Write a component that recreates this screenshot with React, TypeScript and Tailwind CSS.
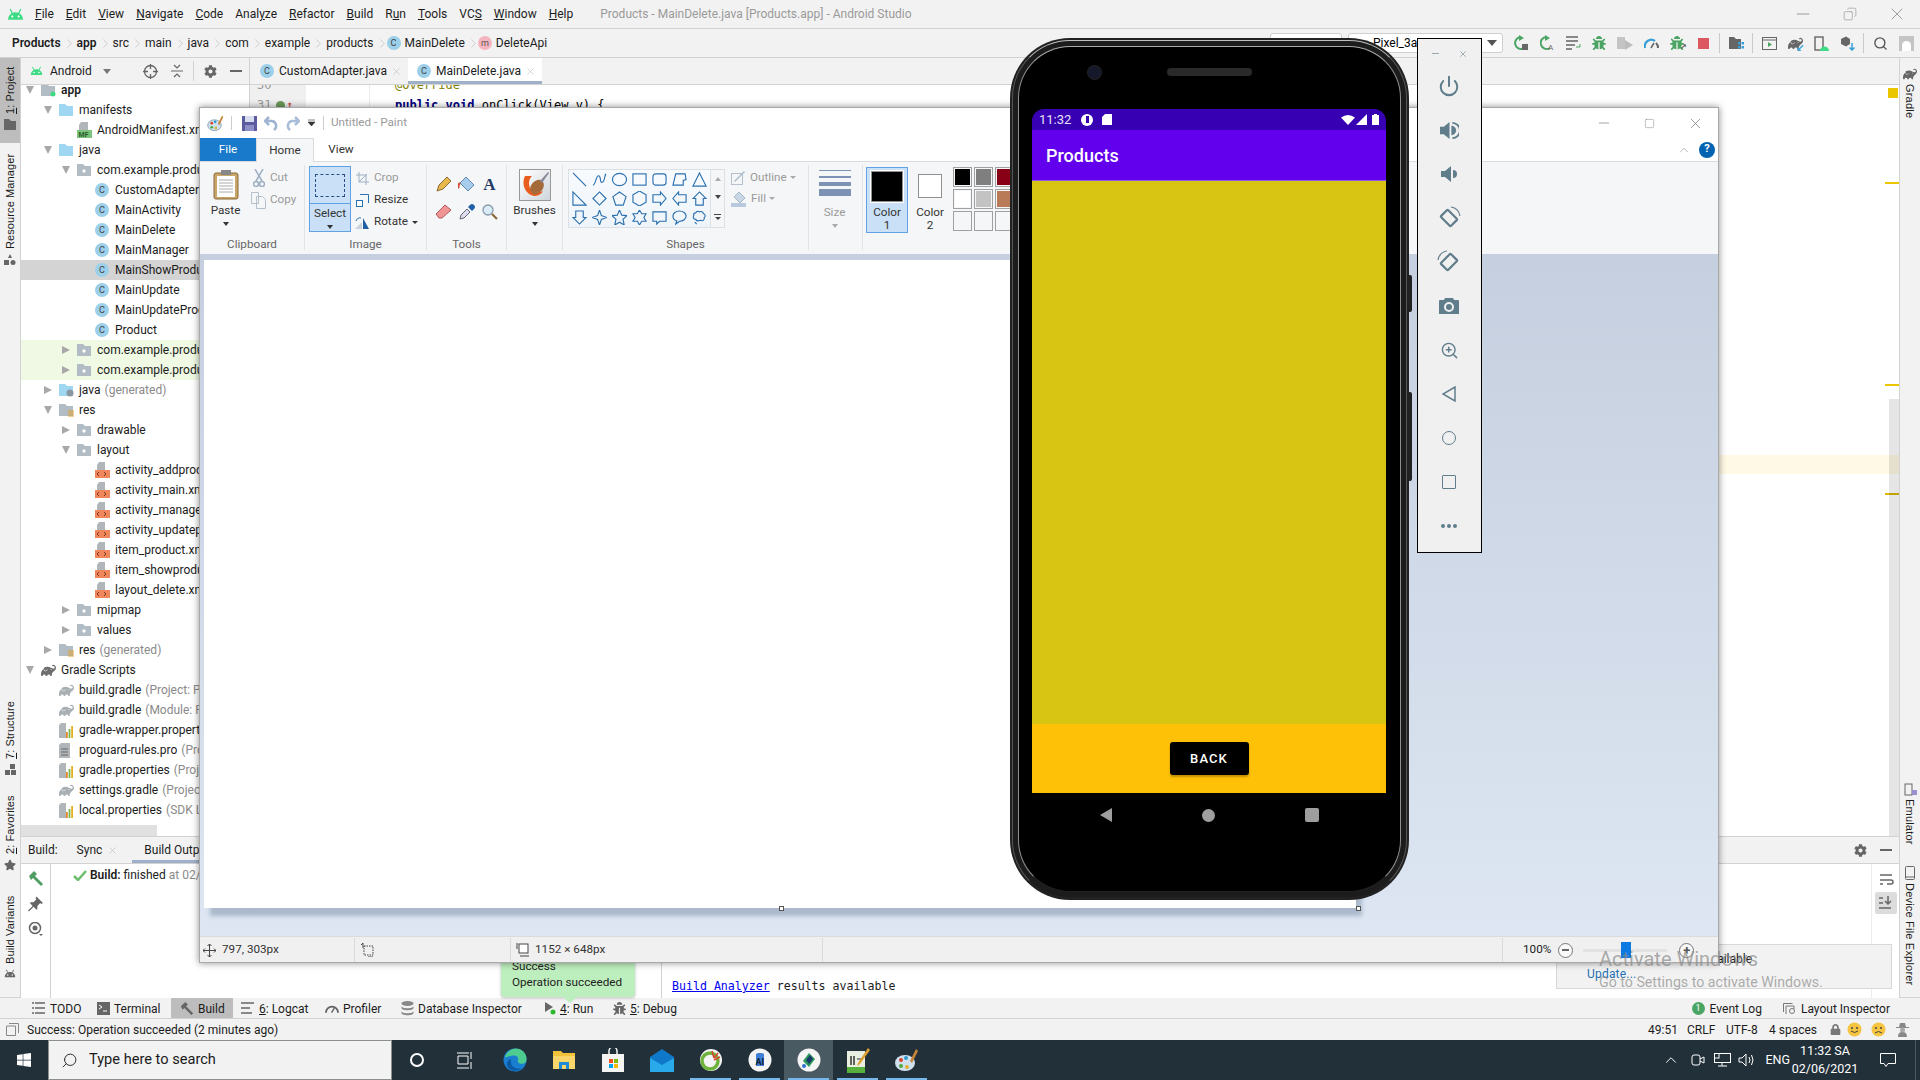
import React from "react";
import { FaCog, FaBug, FaStar, FaWindows, FaLock } from "react-icons/fa";
import { SiGradle } from "react-icons/si";
import { Power, ZoomIn, Search, ChevronUp, ChevronRight, Minus, X, Square, Copy } from "lucide-react";

// --- small shared icons ---
const Letter = ({ l, pink }: { l: string; pink?: boolean }) => (
  <span
    className={
      pink
        ? "flex h-[14px] w-[14px] shrink-0 items-center justify-center rounded-full bg-[#f4b4c0] text-[9px] leading-none text-[#555]"
        : "flex h-[14px] w-[14px] shrink-0 items-center justify-center rounded-full bg-[#9ccfe9] text-[9px] leading-none text-[#444]"
    }
  >
    {l}
  </span>
);

const AndroidHead = ({ color = "#3ddc84", size = 16 }: { color?: string; size?: number }) => (
  <svg width={size} height={size * 0.75} viewBox="0 0 16 12">
    <path d="M1 11C1 7 4 4 8 4s7 3 7 7z" fill={color} />
    <path d="M3 1l2 4M13 1l-2 4" stroke={color} strokeWidth="1.2" />
    <circle cx="5" cy="8" r="1" fill="#fff" />
    <circle cx="11" cy="8" r="1" fill="#fff" />
  </svg>
);

const Folder = ({ kind }: { kind: "pkg" | "src" | "gen" | "res" | "grey" }) => {
  const fill = kind === "src" || kind === "gen" ? "#9fd6f2" : "#b1bcc4";
  return (
    <svg width="15" height="14" viewBox="0 0 15 14" className="shrink-0">
      <path d="M0 1h6l2 2h6v10H0z" fill={fill} />
      {kind === "pkg" && <circle cx="7" cy="8" r="1.7" fill="#fff" />}
      {kind === "gen" && <circle cx="11" cy="10" r="3.5" fill="#8a979f" />}
      {kind === "res" && <path d="M9 8h6M9 10h6M9 12h6M9 14h6" stroke="#e0a030" strokeWidth="1" />}
      {kind === "grey" && <circle cx="12" cy="11" r="2.500" fill="#3ddc84" />}
    </svg>
  );
};

const XmlFile = () => (
  <svg width="15" height="16" viewBox="0 0 15 16" className="shrink-0">
    <path d="M4 0h6v8H2V3z" fill="#b1b6ba" />
    <rect x="0" y="8" width="15" height="8" fill="#f0875c" />
    <path d="M4 10l-2 2 2 2M9 10l2 2-2 2" stroke="#7a3a1c" fill="none" />
  </svg>
);

const PropsFile = () => (
  <svg width="14" height="15" viewBox="0 0 14 15" className="shrink-0">
    <path d="M2 0h5v15H0V2z" fill="#b1b6ba" />
    <rect x="7" y="9" width="1.8" height="6" fill="#e08a2a" />
    <rect x="9.6" y="6" width="1.8" height="9" fill="#7cb850" />
    <rect x="12.2" y="3" width="1.8" height="12" fill="#e8b020" />
  </svg>
);

const TextFile = () => (
  <svg width="11" height="15" viewBox="0 0 11 15" className="shrink-0">
    <path d="M2 0h9v15H0V2z" fill="#b1b6ba" />
    <path d="M2 6h7M2 9h7M2 12h7" stroke="#666" />
  </svg>
);

const Manifest = () => (
  <svg width="15" height="16" viewBox="0 0 15 16" className="shrink-0">
    <path d="M4 0h7v8H2V3z" fill="#b1b6ba" />
    <rect x="0" y="8" width="15" height="8" fill="#7cc47c" />
    <text x="1.5" y="15" fontSize="7" fontWeight="700" fill="#2a5a2a">MF</text>
  </svg>
);

const Gradle = ({ c = "#a9b0b4" }: { c?: string }) => <SiGradle size={15} color={c} className="shrink-0" />;

type Row = { t: string; sub?: string; lvl: number; arrow?: "o" | "c"; icon: React.ReactNode; bg?: string; bold?: boolean };

const Cl = <Letter l="C" />;
const tree: Row[] = [
  { t: "app", lvl: 0, arrow: "o", bold: true, icon: <Folder kind="grey" /> },
  { t: "manifests", lvl: 1, arrow: "o", icon: <Folder kind="src" /> },
  { t: "AndroidManifest.xml", lvl: 2, icon: <Manifest /> },
  { t: "java", lvl: 1, arrow: "o", icon: <Folder kind="src" /> },
  { t: "com.example.products", lvl: 2, arrow: "o", icon: <Folder kind="pkg" /> },
  { t: "CustomAdapter", lvl: 3, icon: Cl },
  { t: "MainActivity", lvl: 3, icon: Cl },
  { t: "MainDelete", lvl: 3, icon: Cl },
  { t: "MainManager", lvl: 3, icon: Cl },
  { t: "MainShowProduct", lvl: 3, icon: Cl, bg: "sel" },
  { t: "MainUpdate", lvl: 3, icon: Cl },
  { t: "MainUpdateProduct", lvl: 3, icon: Cl },
  { t: "Product", lvl: 3, icon: Cl },
  { t: "com.example.products", lvl: 2, arrow: "c", icon: <Folder kind="pkg" />, bg: "test" },
  { t: "com.example.products", lvl: 2, arrow: "c", icon: <Folder kind="pkg" />, bg: "test" },
  { t: "java", sub: "(generated)", lvl: 1, arrow: "c", icon: <Folder kind="gen" /> },
  { t: "res", lvl: 1, arrow: "o", icon: <Folder kind="res" /> },
  { t: "drawable", lvl: 2, arrow: "c", icon: <Folder kind="pkg" /> },
  { t: "layout", lvl: 2, arrow: "o", icon: <Folder kind="pkg" /> },
  { t: "activity_addproduct", lvl: 3, icon: <XmlFile /> },
  { t: "activity_main.xml", lvl: 3, icon: <XmlFile /> },
  { t: "activity_manager", lvl: 3, icon: <XmlFile /> },
  { t: "activity_updateproduct", lvl: 3, icon: <XmlFile /> },
  { t: "item_product.xml", lvl: 3, icon: <XmlFile /> },
  { t: "item_showproduct", lvl: 3, icon: <XmlFile /> },
  { t: "layout_delete.xml", lvl: 3, icon: <XmlFile /> },
  { t: "mipmap", lvl: 2, arrow: "c", icon: <Folder kind="pkg" /> },
  { t: "values", lvl: 2, arrow: "c", icon: <Folder kind="pkg" /> },
  { t: "res", sub: "(generated)", lvl: 1, arrow: "c", icon: <Folder kind="res" /> },
  { t: "Gradle Scripts", lvl: 0, arrow: "o", icon: <Gradle c="#6e6e6e" /> },
  { t: "build.gradle", sub: "(Project: Products)", lvl: 1, icon: <Gradle /> },
  { t: "build.gradle", sub: "(Module: Products.app)", lvl: 1, icon: <Gradle /> },
  { t: "gradle-wrapper.properties", lvl: 1, icon: <PropsFile /> },
  { t: "proguard-rules.pro", sub: "(ProGuard Rules)", lvl: 1, icon: <TextFile /> },
  { t: "gradle.properties", sub: "(Project Properties)", lvl: 1, icon: <PropsFile /> },
  { t: "settings.gradle", sub: "(Project Settings)", lvl: 1, icon: <Gradle /> },
  { t: "local.properties", sub: "(SDK Location)", lvl: 1, icon: <PropsFile /> },
];

const TreeRow = ({ r }: { r: Row }) => (
  <div
    className={
      r.bg === "sel"
        ? "relative flex h-[20px] shrink-0 items-center whitespace-nowrap bg-[#d4d4d4]"
        : r.bg === "test"
        ? "relative flex h-[20px] shrink-0 items-center whitespace-nowrap bg-[#eff9e3]"
        : "relative flex h-[20px] shrink-0 items-center whitespace-nowrap"
    }
    style={{ paddingLeft: 3 + r.lvl * 18 }}
  >
    <span className="flex w-[12px] shrink-0 justify-center">
      {r.arrow === "o" && <span className="h-0 w-0 border-x-[4.5px] border-t-[8px] border-x-transparent border-t-[#a8a8a8]" />}
      {r.arrow === "c" && <span className="h-0 w-0 border-y-[4.5px] border-l-[8px] border-y-transparent border-l-[#a8a8a8]" />}
    </span>
    <span className="ml-[5px] flex w-[20px] shrink-0 justify-start">{r.icon}</span>
    <span className={r.bold ? "font-semibold text-[#1c1c1c]" : "text-[#1c1c1c]"}>{r.t}</span>
    {r.sub && <span className="ml-[4px] text-[#8a8a8a]">{r.sub}</span>}
  </div>
);

const VLabel = ({ children, icon, cls, textCls }: { children: React.ReactNode; icon: React.ReactNode; cls: string; textCls: string }) => (
  <div className={cls}>
    <span className={textCls}>{children}</span>
    <span className="mt-[5px]">{icon}</span>
  </div>
);

// --- menu + navigation ---
const menu: [string, string, string][] = [
  ["", "F", "ile"], ["", "E", "dit"], ["", "V", "iew"], ["", "N", "avigate"], ["", "C", "ode"],
  ["Anal", "y", "ze"], ["", "R", "efactor"], ["", "B", "uild"], ["R", "u", "n"], ["", "T", "ools"],
  ["VC", "S", ""], ["", "W", "indow"], ["", "H", "elp"],
];

const MenuBar = () => (
  <div className="flex h-[29px] shrink-0 items-center border-b border-[#d2d2d2] bg-[#f2f2f2]">
    <span className="ml-[7px] w-[28px]"><AndroidHead size={17} /></span>
    <div className="flex gap-[12px] text-[#1c1c1c]">
      {menu.map(([a, b, c]) => (
        <span key={a + b + c}>{a}<span className="underline">{b}</span>{c}</span>
      ))}
    </div>
    <span className="ml-[27px] text-[#9a9a9a]">Products - MainDelete.java [Products.app] - Android Studio</span>
    <div className="ml-auto flex items-center gap-[30px] pr-[13px] text-[#8a8a8a]">
      <Minus size={20} strokeWidth={1} />
      <Copy size={14} strokeWidth={1} className="-scale-x-100" />
      <X size={20} strokeWidth={1} />
    </div>
  </div>
);

const Sep = () => <ChevronRight size={15} strokeWidth={1} className="mx-[1px] text-[#b8b8b8]" />;

const ToolSlot = ({ children }: { children: React.ReactNode }) => (
  <span className="flex w-[26px] shrink-0 items-center justify-center">{children}</span>
);
const Div = () => <span className="mx-[3px] h-[20px] w-px shrink-0 bg-[#c9c9c9]" />;

const NavBar = () => (
  <div className="flex h-[29px] shrink-0 items-center border-b border-[#d2d2d2] bg-[#f2f2f2] pl-[12px]">
    <b className="font-semibold">Products</b><span className="w-[16px]"><Sep /></span>
    <b className="font-semibold">app</b><span className="w-[16px]"><Sep /></span>
    <span>src</span><span className="w-[16px]"><Sep /></span>
    <span>main</span><span className="w-[16px]"><Sep /></span>
    <span>java</span><span className="w-[16px]"><Sep /></span>
    <span>com</span><span className="w-[16px]"><Sep /></span>
    <span>example</span><span className="w-[16px]"><Sep /></span>
    <span>products</span><span className="w-[13px]"><Sep /></span>
    <Letter l="C" /><span className="ml-[4px]">MainDelete</span><span className="w-[13px]"><Sep /></span>
    <Letter l="m" pink /><span className="ml-[4px]">DeleteApi</span>
    <div className="ml-auto flex items-center">
      <span className="h-[20px] w-[72px] rounded-[3px] border border-[#cfcfcf] bg-white" />
      <span className="ml-[6px] flex h-[20px] w-[155px] items-center justify-between rounded-[3px] border border-[#cfcfcf] bg-white pl-[4px] pr-[5px]">
        <span className="pl-[20px] text-black">Pixel_3a</span>
        <span className="h-0 w-0 border-x-[5px] border-t-[6px] border-x-transparent border-t-[#555]" />
      </span>
      <span className="w-[5px]" />
      <ToolSlot><svg width="15" height="16" viewBox="0 0 15 16"><path d="M7 2a6 6 0 1 0 6 7" stroke="#4aa564" strokeWidth="2" fill="none" /><path d="M5 0l5 3-5 3z" fill="#4aa564" /><rect x="8" y="9" width="6" height="6" fill="#666" /></svg></ToolSlot>
      <ToolSlot><svg width="15" height="16" viewBox="0 0 15 16"><path d="M7 2a6 6 0 1 0 3 11" stroke="#4aa564" strokeWidth="2" fill="none" /><path d="M5 0l5 3-5 3z" fill="#4aa564" /><text x="8" y="15" fontSize="8" fill="#666">A</text></svg></ToolSlot>
      <ToolSlot><svg width="15" height="14" viewBox="0 0 15 14"><path d="M0 1h12M0 5h12M0 9h9M0 13h6" stroke="#666" strokeWidth="1.5" /><path d="M14 8v3h-4" stroke="#4aa564" fill="none" /></svg></ToolSlot>
      <ToolSlot><FaBug size={14} color="#4aa564" /></ToolSlot>
      <ToolSlot><svg width="16" height="15" viewBox="0 0 16 15"><path d="M0 1h8v12H0z" fill="#c4c4c4" /><path d="M8 4l8 5-8 5z" fill="#bcbcbc" /></svg></ToolSlot>
      <ToolSlot><svg width="15" height="11" viewBox="0 0 15 11"><path d="M1 10a6.5 6.5 0 0 1 10-7" stroke="#389fd6" strokeWidth="2.2" fill="none" /><path d="M14 10a6.5 6.5 0 0 0-2-5" stroke="#666" strokeWidth="2" fill="none" /><path d="M7 10l3-5" stroke="#666" strokeWidth="1.5" /></svg></ToolSlot>
      <ToolSlot><span className="relative"><FaBug size={14} color="#4aa564" /><span className="absolute -bottom-[1px] -right-[3px] text-[8px] font-bold leading-none text-[#666]">↗</span></span></ToolSlot>
      <ToolSlot><span className="h-[11px] w-[11px] bg-[#db5860]" /></ToolSlot>
      <Div />
      <ToolSlot><svg width="15" height="12" viewBox="0 0 15 12"><path d="M0 0h5l2 2h5v10H0z" fill="#666" /><rect x="9" y="5" width="2.5" height="2.5" fill="#389fd6" /><rect x="12.5" y="5" width="2.5" height="2.5" fill="#389fd6" /><rect x="9" y="9" width="2.5" height="2.5" fill="#389fd6" /><rect x="12.5" y="9" width="2.5" height="2.5" fill="#389fd6" /></svg></ToolSlot>
      <Div />
      <ToolSlot><svg width="15" height="13" viewBox="0 0 15 13"><rect x=".5" y=".5" width="14" height="12" fill="none" stroke="#666" /><path d="M0 3h15" stroke="#666" /><path d="M6 5l4 2.500-4 2.500z" fill="#4aa564" /></svg></ToolSlot>
      <ToolSlot><span className="relative"><SiGradle size={15} color="#666" /><span className="absolute -bottom-[2px] -right-[1px] text-[10px] font-bold leading-none text-[#389fd6]">↙</span></span></ToolSlot>
      <ToolSlot><svg width="15" height="15" viewBox="0 0 15 15"><rect x="1" y="1" width="8" height="13" fill="none" stroke="#666" strokeWidth="1.4" /><path d="M6 15a4.500 4.500 0 0 1 9 0z" fill="#3ddc84" /></svg></ToolSlot>
      <ToolSlot><svg width="15" height="15" viewBox="0 0 15 15"><path d="M1 3l5-2.500L10 3v5l-4 2.500L1 8z" fill="#666" /><path d="M12 7v7M9.500 11.500L12 14l2.500-2.500" stroke="#389fd6" strokeWidth="1.5" fill="none" /></svg></ToolSlot>
      <Div />
      <ToolSlot><Search size={15} strokeWidth={2.2} color="#555" /></ToolSlot>
      <ToolSlot><span className="flex h-[15px] w-[15px] items-end justify-center overflow-hidden bg-[#c4c4c4]"><span className="h-[10px] w-[9px] rounded-t-full bg-white" /></span></ToolSlot>
      <span className="w-[1px]" />
    </div>
  </div>
);

// --- project + editor ---
const ProjectPanel = () => (
  <div className="flex h-full w-[229px] shrink-0 flex-col border-r border-[#d2d2d2]">
    <div className="relative z-10 flex h-[27px] shrink-0 items-center border-b border-[#d2d2d2] bg-[#f2f2f2] pl-[9px]">
      <AndroidHead size={13} />
      <span className="ml-[7px] w-[44px]">Android</span>
      <span className="ml-[9px] h-0 w-0 border-x-[4px] border-t-[5px] border-x-transparent border-t-[#777]" />
      <svg width="15" height="15" viewBox="0 0 15 15" className="ml-[32px]"><circle cx="7.500" cy="7.500" r="6" fill="none" stroke="#666" strokeWidth="1.300" /><path d="M7.500 0v5M7.500 10v5M0 7.500h5M10 7.500h5" stroke="#666" strokeWidth="1.300" /></svg>
      <svg width="12" height="14" viewBox="0 0 12 14" className="ml-[13px]"><path d="M0 7h12M3 1l3 3 3-3M3 13l3-3 3 3" stroke="#666" strokeWidth="1.200" fill="none" /></svg>
      <span className="ml-[10px] h-[20px] w-px bg-[#d2d2d2]" />
      <FaCog size={13} color="#666" className="ml-[10px]" />
      <span className="ml-[13px] h-[2px] w-[12px] bg-[#666]" />
    </div>
    <div className="-mt-[5px] flex flex-1 flex-col overflow-hidden bg-white">
      <div className="flex flex-col">{tree.map((r, i) => <TreeRow key={i} r={r} />)}</div>
      <div className="mt-auto flex h-[11px] shrink-0"><span className="w-[136px] bg-[#e0e0e0]" /></div>
    </div>
  </div>
);

const Editor = () => (
  <div className="relative flex h-full min-w-0 flex-1 flex-col">
    <div className="flex h-[27px] shrink-0 border-b border-[#d2d2d2] bg-[#f2f2f2]">
      <div className="flex w-[158px] items-center pl-[10px]">
        <Letter l="C" /><span className="ml-[5px]">CustomAdapter.java</span>
        <X size={11} strokeWidth={1} className="ml-[4px] text-[#aaa]" />
      </div>
      <div className="relative flex w-[134px] items-center bg-white pl-[9px]">
        <Letter l="C" /><span className="ml-[5px]">MainDelete.java</span>
        <X size={11} strokeWidth={1} className="ml-[4px] text-[#aaa]" />
        <span className="absolute bottom-0 left-0 right-0 h-[3px] bg-[#9fb1c9]" />
      </div>
    </div>
    <div className="flex flex-1 overflow-hidden bg-white">
      <div className="flex w-[56px] shrink-0 flex-col bg-[#f0f0f0] pl-[7px] font-['DejaVu_Sans_Mono',monospace] text-[12px] text-[#999]">
        <span className="-mt-[6px] h-[12px] leading-[12px]">30</span>
        <div className="mt-[6px] flex h-[16px] items-center">
          <span>31</span>
          <span className="ml-[5px] h-[9px] w-[9px] rounded-full bg-[#6a9a5a] text-[0px]" />
          <span className="ml-[1px] text-[10px] font-bold leading-none text-[#c44]">↑</span>
        </div>
      </div>
      <div className="w-[64px] shrink-0 border-r border-[#ececec]" />
      <div className="relative min-w-0 flex-1 pl-[25px] font-['DejaVu_Sans_Mono',monospace] text-[12px] text-black">
        <div className="-mt-[6px] h-[12px] leading-[12px] text-[#808000]">@Override</div>
        <div className="mt-[6px] h-[16px] leading-[16px]"><b className="text-[#000080]">public void</b> onClick(View v) {"{"}</div>
        <div className="absolute left-0 right-0 top-[370px] h-[19px] bg-[#fff9e5]" />
        <span className="absolute right-[1px] top-[3px] h-[10px] w-[10px] bg-[#eac600]" />
        <span className="absolute right-0 top-[97px] h-[2px] w-[14px] bg-[#eac600]" />
        <span className="absolute right-0 top-[299px] h-[2px] w-[14px] bg-[#eac600]" />
        <span className="absolute right-0 top-[408px] h-[2px] w-[14px] bg-[#d8b800]" />
        <span className="absolute bottom-0 right-0 top-[314px] w-[10px] bg-[#000]/10" />
      </div>
    </div>
  </div>
);

// --- build panel ---
const BuildPanel = () => (
  <div className="relative flex h-[162px] shrink-0 flex-col border-t border-[#d2d2d2]">
    <div className="flex h-[27px] shrink-0 items-center border-b border-[#d2d2d2] bg-[#f2f2f2]">
      <span className="ml-[7px]">Build:</span>
      <span className="ml-[19px]">Sync</span>
      <X size={11} strokeWidth={1} className="ml-[5px] text-[#aaa]" />
      <div className="relative ml-[14px] flex h-full items-center px-[12px]">
        <span>Build Output</span>
        <span className="absolute bottom-0 left-0 right-0 h-[3px] bg-[#9fb1c9]" />
      </div>
      <div className="ml-auto flex items-center gap-[13px] pr-[7px]">
        <FaCog size={13} color="#666" />
        <span className="h-[2px] w-[12px] bg-[#666]" />
      </div>
    </div>
    <div className="flex min-h-0 flex-1 bg-white">
      <div className="flex w-[30px] shrink-0 flex-col items-center gap-[10px] border-r border-[#d2d2d2] pt-[6px]">
        <svg width="16" height="16" viewBox="0 0 16 16"><path d="M1 6l5-5 3 3-2 2 8 8-2 2-8-8-2 2z" fill="#4f9d63" /></svg>
        <svg width="15" height="16" viewBox="0 0 16 16"><path d="M9 0l7 7-2 1-1-1-3 3 0 3-1 1-3-3-5 5-1-1 5-5-3-3 1-1h3l3-3-1-1z" fill="#666" /></svg>
        <svg width="15" height="15" viewBox="0 0 15 15"><circle cx="7" cy="6" r="5.500" fill="none" stroke="#666" strokeWidth="1.500" /><circle cx="7" cy="6" r="2.500" fill="#666" /><path d="M11 12h4l-2 2z" fill="#666" /></svg>
      </div>
      <div className="flex w-[611px] shrink-0 items-start border-r border-[#d2d2d2] pl-[22px] pt-[1px]">
        <div className="flex h-[20px] items-center">
          <svg width="14" height="11" viewBox="0 0 14 11"><path d="M1 6l4 4 8-9" stroke="#6cbf6c" strokeWidth="2.500" fill="none" /></svg>
          <b className="ml-[3px] font-semibold">Build:</b>
          <span className="ml-[3px]">finished</span>
          <span className="ml-[3px] text-[#8a8a8a]">at 02/06/2021 11:30</span>
        </div>
      </div>
      <div className="flex min-w-0 flex-1 flex-col justify-end pb-[4px] pl-[10px] font-['DejaVu_Sans_Mono',monospace] text-[11.600px] leading-[16px]">
        <div><span className="text-[#0000ee] underline">Build Analyzer</span> results available</div>
      </div>
      <div className="flex w-[28px] shrink-0 flex-col items-center gap-[2px] border-l border-[#ececec] pt-[4px]">
        <svg width="22" height="22" viewBox="0 0 22 22"><path d="M5 7h12M5 12h11a2 2 0 0 1 0 4h-4M5 16h3" stroke="#666" strokeWidth="1.500" fill="none" /></svg>
        <span className="flex h-[22px] w-[22px] items-center justify-center rounded-[2px] bg-[#dcdcdc]">
          <svg width="14" height="14" viewBox="0 0 14 14"><path d="M0 2h4M0 7h4M0 12h12M9 0v7M6 5l3 3 3-3" stroke="#666" strokeWidth="1.500" fill="none" /></svg>
        </span>
      </div>
    </div>
    {/* update balloon */}
    <div className="absolute bottom-[9px] right-[7px] flex h-[45px] w-[336px] flex-col items-start justify-start border border-[#d8d8d8] bg-[#f2f2f2] pl-[30px] pt-[6px]">
      <span className="pl-[118px] leading-[16px]">available</span>
      <span className="leading-[15px] tracking-[0.2px] text-[#2470b3]">Update...</span>
    </div>
  </div>
);

type Bt = { t: React.ReactNode; icon: React.ReactNode; cls: string };
const bottomItems: Bt[] = [
  { t: "TODO", cls: "flex w-[65px] items-center", icon: <svg width="14" height="12" viewBox="0 0 14 12"><path d="M3 1h10M3 6h10M3 11h10M0 1h2M0 6h2M0 11h2" stroke="#666" strokeWidth="1.500" /></svg> },
  { t: "Terminal", cls: "flex w-[74px] items-center", icon: <svg width="13" height="13" viewBox="0 0 13 13"><rect width="13" height="13" fill="#666" /><path d="M2 3l3 2-3 2M6 9h4" stroke="#fff" fill="none" /></svg> },
  { t: "Build", cls: "flex h-full w-[62px] items-center bg-[#bdbdbd] pl-[9px]", icon: <svg width="14" height="14" viewBox="0 0 16 16"><path d="M1 6l5-5 3 3-2 2 8 8-2 2-8-8-2 2z" fill="#666" /></svg> },
  { t: <span><span className="underline">6</span>: Logcat</span>, cls: "ml-[8px] flex w-[84px] items-center", icon: <svg width="14" height="12" viewBox="0 0 14 12"><path d="M0 1h13M0 6h9M0 11h11" stroke="#666" strokeWidth="1.500" /></svg> },
  { t: "Profiler", cls: "flex w-[76px] items-center", icon: <svg width="14" height="11" viewBox="0 0 15 11"><path d="M1 10a6.500 6.500 0 0 1 13 0" stroke="#666" strokeWidth="2" fill="none" /><path d="M7 10l3-5" stroke="#666" strokeWidth="1.500" /></svg> },
  { t: "Database Inspector", cls: "flex w-[143px] items-center", icon: <svg width="13" height="15" viewBox="0 0 13 15"><ellipse cx="6.500" cy="2.500" rx="6" ry="2.500" fill="#888" /><path d="M.5 5v2c0 3 12 3 12 0V5c0 3-12 3-12 0zM.5 10v2c0 3 12 3 12 0v-2c0 3-12 3-12 0z" fill="#888" /></svg> },
  { t: <span><span className="underline">4</span>: Run</span>, cls: "flex w-[69px] items-center", icon: <svg width="12" height="14" viewBox="0 0 12 14"><path d="M1 1l8 5-8 5z" fill="#666" /><circle cx="9" cy="11" r="2.500" fill="#2eb82e" /></svg> },
  { t: <span><span className="underline">5</span>: Debug</span>, cls: "flex items-center", icon: <FaBug size={13} color="#666" /> },
];

const BottomBar = () => (
  <div className="flex h-[22px] shrink-0 items-center border-y border-[#d2d2d2] bg-[#f2f2f2] pl-[32px]">
    {bottomItems.map((b, i) => (
      <div key={i} className={b.cls}>
        {b.icon}
        <span className="ml-[4px] whitespace-nowrap pt-[1px]">{b.t}</span>
      </div>
    ))}
    <div className="ml-auto flex items-center pr-[30px] pt-[1px]">
      <span className="flex h-[13px] w-[13px] items-center justify-center rounded-full bg-[#4aa564] text-[9px] text-white">1</span>
      <span className="ml-[5px]">Event Log</span>
      <svg width="13" height="12" viewBox="0 0 13 12" className="ml-[21px]"><path d="M.5 9V.5h9M3 11V3h8v3" stroke="#777" fill="none" /><circle cx="9" cy="8" r="2.500" fill="none" stroke="#777" /></svg>
      <span className="ml-[5px]">Layout Inspector</span>
    </div>
  </div>
);

const Face = ({ sad }: { sad?: boolean }) => (
  <svg width="15" height="15" viewBox="0 0 15 15">
    <circle cx="7.500" cy="7.500" r="7" fill="#f5c542" />
    <circle cx="5" cy="6" r="1" fill="#444" />
    <circle cx="10" cy="6" r="1" fill="#444" />
    <path d={sad ? "M4 11q3.500-3 7 0" : "M4 9q3.500 3 7 0"} stroke="#444" fill="none" />
  </svg>
);

const StatusBar = () => (
  <div className="flex h-[21px] shrink-0 items-center bg-[#f2f2f2] pl-[6px]">
    <svg width="13" height="13" viewBox="0 0 13 13"><path d="M3 .5h9.500V10M.5 3h9v9.500h-9z" fill="none" stroke="#888" /></svg>
    <span className="ml-[8px]">Success: Operation succeeded (2 minutes ago)</span>
    <div className="ml-auto flex items-center pr-[11px]">
      <span className="w-[39px]">49:51</span>
      <span className="w-[39px]">CRLF</span>
      <span className="w-[43px]">UTF-8</span>
      <span className="w-[61px]">4 spaces</span>
      <span className="w-[17px]"><FaLock size={11} color="#777" /></span>
      <span className="w-[24px]"><Face /></span>
      <span className="w-[25px]"><Face sad /></span>
      <svg width="13" height="14" viewBox="0 0 13 14"><path d="M3 4l1-4h5l1 4h3v1H0V4zM2 14c0-4 2-5 4.500-5S11 10 11 14z" fill="#888" /><circle cx="6.500" cy="7" r="2.500" fill="#aaa" /></svg>
    </div>
  </div>
);

// --- taskbar ---
const Task = ({ children, active, open }: { children: React.ReactNode; open?: boolean; active?: boolean }) => (
  <div className={active ? "relative flex h-full w-[49px] items-center justify-center bg-[#4a5a62]" : "relative flex h-full w-[49px] items-center justify-center"}>
    {children}
    {open && <span className="absolute bottom-0 left-[4px] right-[4px] h-[2px] bg-[#76b9ed]" />}
  </div>
);

const Taskbar = () => (
  <div className="flex h-[40px] shrink-0 items-center bg-[#22303a] text-white">
    <div className="flex w-[48px] justify-center"><FaWindows size={16} /></div>
    <div className="flex h-full w-[344px] items-center border border-[#8a8f92] bg-[#f2f2f2] pl-[12px] text-[#1a1a1a]">
      <Search size={17} strokeWidth={1.300} className="-scale-x-100 text-[#222]" />
      <span className="ml-[11px] text-[14.600px]">Type here to search</span>
    </div>
    <div className="flex h-full items-center">
      <Task><span className="h-[14px] w-[14px] rounded-full border-[2px] border-white" /></Task>
      <Task><svg width="17" height="17" viewBox="0 0 17 17"><path d="M0 1h12M0 16h12M14 0v7M14 10v7M1 4h10v8H1z" stroke="#fff" fill="none" /></svg></Task>
      <Task><svg width="24" height="24" viewBox="0 0 24 24"><circle cx="12" cy="12" r="11.500" fill="#1a7fd0" /><path d="M2 9C4 3 9 .5 13 .5c6 0 11 5 10.500 11 0 4-4 5-6.500 4-2-.5-2.500-2-2-3.500 1-2-1-4.500-4-4.500-4 0-7 2-9 1.500z" fill="#4ecb8f" /><path d="M8 14c0 5 6 8 11 6-4 4-13 4-15-3-.500-3 2-6 4-6z" fill="#0c59a4" /></svg></Task>
      <Task><svg width="22" height="20" viewBox="0 0 22 20"><path d="M0 1h8l2 2h12v16H0z" fill="#f3c13a" /><path d="M0 6h22v13H0z" fill="#f9d56a" /><path d="M6 12h10v7H6z" fill="#1f8ad6" /><path d="M9 15h4v4H9z" fill="#f9d56a" /></svg></Task>
      <Task><svg width="22" height="24" viewBox="0 0 22 24"><rect y="6" width="22" height="18" fill="#f4f4f4" /><path d="M7 8V3a4 4 0 0 1 8 0v5" stroke="#f4f4f4" strokeWidth="1.500" fill="none" /><rect x="7" y="11" width="4" height="4" fill="#f25022" /><rect x="12" y="11" width="4" height="4" fill="#7fba00" /><rect x="7" y="16" width="4" height="4" fill="#00a4ef" /><rect x="12" y="16" width="4" height="4" fill="#ffb900" /></svg></Task>
      <Task><svg width="24" height="23" viewBox="0 0 24 23"><path d="M12 0l12 8v15H0V8z" fill="#0f78c9" /><path d="M0 9l12 7 12-7v14H0z" fill="#29a8ea" /></svg></Task>
      <Task open><svg width="24" height="24" viewBox="0 0 24 24"><circle cx="12" cy="12" r="11" fill="#f4f4f4" /><circle cx="11" cy="13" r="8" fill="none" stroke="#6fb33e" strokeWidth="3.500" /><path d="M13 3l2 7M19 5l-4 5M21 9l-6 3" stroke="#d9432f" strokeWidth="1.500" /></svg></Task>
      <Task open><svg width="24" height="24" viewBox="0 0 24 24"><circle cx="12" cy="12" r="11.500" fill="#f4f4f4" /><path d="M8 6l2-1h4l2 1v12H8z" fill="#3f7fd6" /><text x="7.500" y="17" fontSize="9" fontWeight="700" fill="#123">AI</text></svg></Task>
      <Task open active><svg width="24" height="24" viewBox="0 0 24 24"><circle cx="12" cy="12" r="11.500" fill="#f4f4f4" /><path d="M12 5l6 6-6 8-6-6z" fill="#2a9a5a" /><path d="M13 7l3 4-4 5-3-4z" fill="#193a6a" /><circle cx="7" cy="18" r="2" fill="#2f6fd0" /></svg></Task>
      <Task open><svg width="24" height="26" viewBox="0 0 24 26"><rect x="1" y="4" width="18" height="22" fill="#e9efe0" /><rect x="1" y="20" width="18" height="6" fill="#57b13c" /><path d="M5 9v9M8 9v9" stroke="#333" strokeWidth="1.500" /><path d="M11 12h4" stroke="#333" /><path d="M22 1L12 16l-1 3 3-2L24 3z" fill="#e0a030" /></svg></Task>
      <Task open><svg width="25" height="25" viewBox="0 0 25 25"><ellipse cx="11" cy="15" rx="10" ry="8" fill="#cfe0ef" /><circle cx="7" cy="12" r="2" fill="#d9432f" /><circle cx="12" cy="10" r="2" fill="#2f9ad0" /><circle cx="7" cy="18" r="2" fill="#4fa83d" /><circle cx="13" cy="19" r="2" fill="#e0b030" /><path d="M22 1l-6 12 2 2 6-12z" fill="#c8843a" /></svg></Task>
    </div>
    <div className="ml-auto flex h-full items-center">
      <ChevronUp size={18} strokeWidth={1.300} />
      <svg width="14" height="16" viewBox="0 0 14 16" className="ml-[11px]"><rect x="1" y="3" width="8" height="10" rx="2" fill="none" stroke="#fff" /><path d="M9 7l4-2v6l-4-2" fill="none" stroke="#fff" /></svg>
      <svg width="17" height="14" viewBox="0 0 17 14" className="ml-[9px]"><rect x=".5" y=".5" width="16" height="9" fill="none" stroke="#fff" /><path d="M8 10v3M4 13h9" stroke="#fff" /><rect x="0" y="0" width="5" height="5" fill="none" stroke="#fff" /></svg>
      <svg width="17" height="14" viewBox="0 0 17 14" className="ml-[7px]"><path d="M1 5h3l4-4v12l-4-4H1zM11 4q2 3 0 6M13.500 2q3 5 0 10" fill="none" stroke="#fff" /></svg>
      <span className="ml-[10px] text-[12.500px]">ENG</span>
      <div className="ml-[3px] flex w-[64px] flex-col items-center text-[12.500px] leading-[18px]">
        <span>11:32 SA</span>
        <span>02/06/2021</span>
      </div>
      <svg width="16" height="15" viewBox="0 0 16 15" className="ml-[23px]"><path d="M.5.500h15v10H8l-2 3-2-3H.5z" fill="none" stroke="#fff" /></svg>
      <span className="ml-[19px] mr-[4px] h-full w-px bg-[#4a5a62]" />
    </div>
  </div>
);

// --- paint window ---
const SmallAction = ({ icon, label, grey, caret }: { icon: React.ReactNode; label: string; grey?: boolean; caret?: boolean }) => (
  <div className="flex h-[22px] items-center">
    <span className="flex w-[15px] justify-center">{icon}</span>
    <span className={grey ? "ml-[4px] text-[#9a9a9a]" : "ml-[4px] text-[#333]"}>{label}</span>
    {caret && <span className="ml-[4px] h-0 w-0 border-x-[3px] border-t-[3px] border-x-transparent border-t-[#333]" />}
  </div>
);

const Caret = ({ c = "border-t-[#333]" }: { c?: string }) => (
  <span className={"mt-[2px] h-0 w-0 border-x-[3px] border-t-[4px] border-x-transparent " + c} />
);

const Group = ({ label, cls, children }: { label: string; cls: string; children: React.ReactNode }) => (
  <div className={cls}>
    <div className="flex h-[68px] shrink-0">{children}</div>
    <div className="mt-[3px] text-center text-[#666]">{label}</div>
  </div>
);

const S = "#2a6fae";
const shapes: React.ReactNode[] = [
  <path d="M1 1l14 14" />,
  <path d="M1 14c3 0 3-10 6-10s1 8 4 7 2-8 4-9" />,
  <ellipse cx="8" cy="8" rx="7.500" ry="6.500" />,
  <rect x="1" y="2" width="14" height="12" />,
  <rect x="1" y="2" width="14" height="12" rx="3" />,
  <path d="M4 2h10l1 6-3 1v5H1z" />,
  <path d="M8 1l7 14H1z" />,
  <path d="M1 1v14h14z" />,
  <path d="M8 1l7 7-7 7-7-7z" />,
  <path d="M8 1l7 5-3 9H4L1 6z" />,
  <path d="M8 0l7 4v8l-7 4-7-4V4z" />,
  <path d="M1 4h8V1l6 7-6 7v-3H1z" />,
  <path d="M15 4H7V1L1 8l6 7v-3h8z" />,
  <path d="M4 15V8H1l7-7 7 7h-3v7z" />,
  <path d="M4 1v7H1l7 7 7-7h-3V1z" />,
  <path d="M8 0l2 6 6 2-6 2-2 6-2-6-6-2 6-2z" />,
  <path d="M8 0l2.400 5.500 5.600.500-4.200 3.800L13 16l-5-3-5 3 1.200-6.200L0 6l5.600-.5z" />,
  <path d="M8 0l2.300 4H15l-2.300 4 2.300 4h-4.700L8 16l-2.300-4H1l2.300-4L1 4h4.700z" />,
  <path d="M1 2h14v10H8l-3 3v-3H1z" />,
  <path d="M8 1c4 0 7 2.500 7 5.500S12 12 8 12l-4 3 1-3.500C2.500 11 1 9 1 6.500 1 3.500 4 1 8 1z" />,
  <path d="M4 3c1-2 3-2 4-1 2-1 4 0 4 2 2 0 3 3 1 4 1 3-2 4-4 3-2 1-4 1-5-1-3 0-3-3-2-4C1 5 2 3 4 3zM3 13l2 2" />,
];

const swatches = ["bg-black", "bg-[#7f7f7f]", "bg-[#880015]", "bg-white", "bg-[#c3c3c3]", "bg-[#b97a57]", "bg-[#f5f6f7]", "bg-[#f5f6f7]", "bg-[#f5f6f7]"];

const Paint = () => (
  <div className="absolute left-[199px] top-[107px] flex h-[856px] w-[1520px] flex-col border border-[#a9a9a9] bg-white font-['Roboto',sans-serif] text-[11.700px] text-[#333] shadow-[0_0_7px_rgba(0,0,0,0.45)]">
    {/* title */}
    <div className="flex h-[30px] shrink-0 items-center bg-white">
      <svg width="17" height="17" viewBox="0 0 25 25" className="ml-[7px]"><ellipse cx="11" cy="15" rx="10" ry="8" fill="#cfe0ef" stroke="#6a8aa0" /><circle cx="7" cy="12" r="2" fill="#d9432f" /><circle cx="12" cy="10" r="2" fill="#2f9ad0" /><circle cx="7" cy="18" r="2" fill="#4fa83d" /><circle cx="13" cy="19" r="2" fill="#e0b030" /><path d="M22 1l-6 12 2 2 6-12z" fill="#c8843a" /></svg>
      <span className="ml-[7px] h-[14px] w-px bg-[#ccc]" />
      <svg width="15" height="15" viewBox="0 0 15 15" className="ml-[10px]"><rect width="15" height="15" fill="#5b5ca0" /><rect x="3" y="0" width="9" height="6" fill="#d8dcef" /><rect x="3" y="9" width="9" height="6" fill="#8e8fc4" /></svg>
      <svg width="15" height="15" viewBox="0 0 15 15" className="ml-[7px]"><path d="M5 1L1 5l4 4M2 5h6a5 5 0 0 1 2 9" fill="none" stroke="#9fb4d0" strokeWidth="2.500" /></svg>
      <svg width="15" height="15" viewBox="0 0 15 15" className="ml-[6px]"><path d="M10 1l4 4-4 4M13 5H7a5 5 0 0 0-2 9" fill="none" stroke="#a9bdd8" strokeWidth="2.500" /></svg>
      <svg width="7" height="8" viewBox="0 0 7 8" className="ml-[8px]"><path d="M0 1h7M0 3h7l-3.500 4z" fill="#333" stroke="#333" strokeWidth=".6" /></svg>
      <span className="ml-[8px] h-[14px] w-px bg-[#ccc]" />
      <span className="ml-[7px] text-[#9a9a9a]">Untitled - Paint</span>
      <div className="ml-auto flex items-center gap-[32px] pr-[14px] text-[#777]">
        <Minus size={16} strokeWidth={1} />
        <Square size={11} strokeWidth={1} className="h-[11px] w-[11px]" />
        <X size={17} strokeWidth={1} />
      </div>
    </div>
    {/* tabs */}
    <div className="flex h-[24px] shrink-0 items-stretch border-b border-[#dadbdc] bg-white">
      <span className="flex w-[56px] items-center justify-center bg-[#1979ca] text-white">File</span>
      <span className="-mb-px flex w-[58px] items-center justify-center border-x border-t border-[#dadbdc] bg-[#f5f6f7]">Home</span>
      <span className="flex w-[54px] items-center justify-center">View</span>
      <div className="ml-auto flex items-center pr-[3px]">
        <ChevronUp size={14} strokeWidth={1} className="text-[#888]" />
        <span className="ml-[8px] flex h-[16px] w-[16px] items-center justify-center rounded-full bg-[#0063b1] text-[11px] font-bold text-white">?</span>
      </div>
    </div>
    {/* ribbon */}
    <div className="flex h-[92px] shrink-0 bg-[#f5f6f7] pt-[3px]">
      <Group label="Clipboard" cls="flex h-[85px] w-[105px] shrink-0 flex-col border-r border-[#e2e3e4]">
        <div className="flex w-[51px] flex-col items-center pt-[5px]">
          <svg width="26" height="30" viewBox="0 0 26 30"><rect x="1" y="3" width="24" height="26" rx="2" fill="#c9a56a" stroke="#8a6a3a" /><rect x="4" y="6" width="18" height="21" fill="#fff" /><path d="M6 10h14M6 13h14M6 16h14M6 19h14M6 22h14" stroke="#aaa" /><rect x="8" y="0" width="10" height="5" fill="#888" /></svg>
          <span className="mt-[2px]">Paste</span>
          <Caret />
        </div>
        <div className="flex flex-col pt-[2px]">
          <SmallAction grey label="Cut" icon={<svg width="12" height="18" viewBox="0 0 12 18"><path d="M2 0l7 12M10 0L3 12" stroke="#9fb0c4" strokeWidth="1.500" /><circle cx="3" cy="15" r="2.500" fill="none" stroke="#9fb0c4" strokeWidth="1.500" /><circle cx="9" cy="15" r="2.500" fill="none" stroke="#9fb0c4" strokeWidth="1.500" /></svg>} />
          <SmallAction grey label="Copy" icon={<svg width="15" height="17" viewBox="0 0 15 17"><path d="M.5.500h7v11h-7zM5.500 4.500h6l3 3v9h-9z" fill="#f4f6f8" stroke="#b5c0cc" /></svg>} />
        </div>
      </Group>
      <Group label="Image" cls="flex h-[85px] w-[122px] shrink-0 flex-col border-r border-[#e2e3e4]">
        <div className="ml-[4px] mt-[1px] flex h-[66px] w-[42px] flex-col items-center border border-[#62a2e4] bg-[#c9e0f7]">
          <div className="flex h-[37px] w-full items-center justify-center border-b border-[#62a2e4]">
            <span className="h-[23px] w-[30px] border border-dashed border-[#2a4f88]" />
          </div>
          <span className="mt-[1px]">Select</span>
          <Caret />
        </div>
        <div className="ml-[4px] flex flex-col pt-[2px]">
          <SmallAction grey label="Crop" icon={<svg width="13" height="13" viewBox="0 0 13 13"><path d="M3 0v10h10M0 3h10v10M3 10L11 2" fill="none" stroke="#9fb0c4" /></svg>} />
          <SmallAction label="Resize" icon={<svg width="13" height="13" viewBox="0 0 13 13"><rect x=".5" y="6.500" width="6" height="6" fill="#fff" stroke="#2a6fae" /><path d="M4 .500h8.500V9" fill="none" stroke="#2a6fae" /></svg>} />
          <SmallAction caret label="Rotate" icon={<svg width="15" height="14" viewBox="0 0 15 14"><path d="M0 14L7 7v7z" fill="#c9d2dc" /><path d="M8 3l6 11H8z" fill="#1f5fa8" /><path d="M1 6a4 4 0 0 1 5-3" stroke="#2a6fae" fill="none" /></svg>} />
        </div>
      </Group>
      <Group label="Tools" cls="flex h-[85px] w-[80px] shrink-0 flex-col border-r border-[#e2e3e4]">
        <div className="grid h-[60px] w-full grid-cols-3 place-items-center px-[5px] pt-[5px]">
          <svg width="16" height="16" viewBox="0 0 16 16"><path d="M1 15l2-6L11 1l4 4-8 8z" fill="#e8b94a" stroke="#8a6a3a" /></svg>
          <svg width="17" height="17" viewBox="0 0 17 17"><path d="M8 1l8 8-6 6-8-8z" fill="#a8cdec" stroke="#5e8ab4" /><path d="M2 7c-2 2-2 4-1 5" stroke="#d9432f" strokeWidth="2" fill="none" /></svg>
          <span className="font-['Liberation_Serif',serif] text-[17px] font-bold leading-none text-[#1f3a66]">A</span>
          <svg width="17" height="15" viewBox="0 0 17 15"><path d="M1 10l9-9 6 5-9 8H4z" fill="#f09595" stroke="#b05a5a" /></svg>
          <svg width="16" height="16" viewBox="0 0 16 16"><path d="M1 15l1-4 6-6 3 3-6 6z" fill="#dde" stroke="#667" /><path d="M9 3l2-2a2 2 0 0 1 4 4l-2 2z" fill="#1f5fa8" /></svg>
          <svg width="16" height="16" viewBox="0 0 16 16"><circle cx="6" cy="6" r="5" fill="#d8ecf9" stroke="#8b9baa" strokeWidth="1.300" /><path d="M10 10l5 5" stroke="#8a6a3a" strokeWidth="2.200" /></svg>
        </div>
      </Group>
      <Group label="" cls="flex h-[85px] w-[56px] shrink-0 flex-col border-r border-[#e2e3e4]">
        <div className="flex w-full flex-col items-center pt-[4px]">
          <span className="flex h-[32px] w-[32px] items-center justify-center overflow-hidden border border-[#999] bg-gradient-to-br from-white to-[#cfd6dc]">
            <svg width="30" height="30" viewBox="0 0 30 30"><path d="M5 6c-4 8 0 18 9 20 3 0 7-1 9-5-6 3-14 1-14-8 0-3 1-5 3-7z" fill="#e85d1d" /><ellipse cx="17" cy="17" rx="6" ry="8" fill="#a56a3a" transform="rotate(40 17 17)" /><path d="M20 11l8-9 1 1-7 10z" fill="#889" /></svg>
          </span>
          <span className="mt-[1px]">Brushes</span>
          <Caret />
        </div>
      </Group>
      <Group label="Shapes" cls="flex h-[85px] w-[246px] shrink-0 flex-col border-r border-[#e2e3e4]">
        <div className="ml-[5px] mt-[4px] flex h-[59px] border border-[#dce0e4] bg-gradient-to-b from-[#f8fbfe] to-[#eef4f9]">
          <div className="grid w-[141px] grid-cols-7 place-items-center">
            {shapes.map((p, i) => (
              <svg key={i} width="15" height="15" viewBox="0 0 16 16" fill="none" stroke={S} strokeWidth="1.200">{p}</svg>
            ))}
          </div>
          <div className="flex w-[14px] flex-col items-center justify-around border-l border-[#dce0e4] bg-[#f5f6f7] text-[0px]">
            <span className="h-0 w-0 border-x-[3px] border-b-[4px] border-x-transparent border-b-[#aaa]" />
            <span className="h-0 w-0 border-x-[3px] border-t-[4px] border-x-transparent border-t-[#444]" />
            <span className="h-[6px] w-[7px] border-t border-[#444]"><span className="mx-auto mt-[2px] block h-0 w-0 border-x-[3px] border-t-[3px] border-x-transparent border-t-[#444]" /></span>
          </div>
        </div>
        <div className="ml-[6px] flex flex-col pt-[2px] text-[#9a9a9a]">
          <div className="flex h-[21px] items-center">
            <svg width="15" height="15" viewBox="0 0 15 15"><rect x=".5" y="3.500" width="11" height="11" fill="none" stroke="#b5c0cc" /><path d="M3 11L13 1l1 1L4 12z" fill="#a9bdd0" /></svg>
            <span className="ml-[4px]">Outline</span>
            <span className="ml-[3px] h-0 w-0 border-x-[3px] border-t-[3px] border-x-transparent border-t-[#aaa]" />
          </div>
          <div className="flex h-[21px] items-center">
            <svg width="16" height="16" viewBox="0 0 16 16"><path d="M8 1l6 6-5 5-6-6z" fill="#c9d6e4" stroke="#a9b8c8" /><rect x="0" y="12" width="15" height="4" fill="#b9c9de" /></svg>
            <span className="ml-[4px]">Fill</span>
            <span className="ml-[3px] h-0 w-0 border-x-[3px] border-t-[3px] border-x-transparent border-t-[#aaa]" />
          </div>
        </div>
      </Group>
      <Group label="" cls="flex h-[85px] w-[54px] shrink-0 flex-col border-r border-[#e2e3e4]">
        <div className="flex w-full -translate-x-[1px] flex-col items-center pt-[5px] text-[#9a9a9a]">
          <span className="h-px w-[32px] bg-[#7e93b3]" />
          <span className="mt-[5px] h-[2px] w-[32px] bg-[#7e93b3]" />
          <span className="mt-[4px] h-[4px] w-[32px] bg-[#7e93b3]" />
          <span className="mt-[3px] h-[7px] w-[32px] bg-[#7e93b3]" />
          <span className="mt-[8px]">Size</span>
          <Caret c="border-t-[#aaa]" />
        </div>
      </Group>
      <div className="flex h-[71px] items-start pl-[3px] pt-[2px]">
        <div className="flex h-[66px] w-[42px] flex-col items-center border border-[#62a2e4] bg-[#c9e0f7] pt-[3px] leading-[13px]">
          <span className="h-[32px] w-[32px] border border-[#909090] bg-black outline outline-1 outline-white" />
          <span className="mt-[4px]">Color</span>
          <span>1</span>
        </div>
        <div className="ml-[3px] flex w-[38px] flex-col items-center pt-[7px] leading-[13px]">
          <span className="h-[24px] w-[24px] border border-[#909090] bg-white" />
          <span className="mt-[8px]">Color</span>
          <span>2</span>
        </div>
        <div className="ml-[4px] grid grid-cols-3 gap-[2px]">
          {swatches.map((c, i) => (
            <span key={i} className="h-[20px] w-[19px] border border-[#a0a0a0] p-px">
              <span className={"block h-full w-full " + c} />
            </span>
          ))}
        </div>
      </div>
    </div>
    {/* canvas */}
    <div className="flex min-h-0 flex-1 flex-col bg-gradient-to-b from-[#c5cfdf] to-[#dde6f2] pl-[4px] pt-[6px]">
      <div className="h-[648px] w-[1152px] shrink-0 bg-white shadow-[6px_8px_4px_rgba(100,120,150,0.4)]" />
    </div>
    <span className="absolute left-[579px] top-[798px] h-[5px] w-[5px] border border-[#555] bg-white" />
    <span className="absolute left-[1156px] top-[798px] h-[5px] w-[5px] border border-[#555] bg-white" />
    {/* status */}
    <div className="flex h-[26px] shrink-0 items-center border-t border-[#dadbdc] bg-[#f0f0f0] pt-[1px]">
      <div className="flex h-full w-[155px] items-center border-r border-[#dadbdc] pl-[3px]">
        <svg width="13" height="13" viewBox="0 0 13 13"><path d="M6.500 0v13M0 6.500h13M4.500 2l2-2 2 2M4.500 11l2 2 2-2M2 4.500l-2 2 2 2M11 4.500l2 2-2 2" stroke="#444" fill="none" /></svg>
        <span className="ml-[6px] whitespace-nowrap">797, 303px</span>
      </div>
      <div className="flex h-full w-[156px] items-center border-r border-[#dadbdc] pl-[6px]">
        <svg width="14" height="14" viewBox="0 0 14 14"><rect x="3" y="3" width="9" height="9" fill="none" stroke="#444" strokeDasharray="1.500 1" /><path d="M2 0v5M0 2l2-2M12 14H7" stroke="#444" /></svg>
      </div>
      <div className="flex h-full w-[312px] items-center border-r border-[#dadbdc] pl-[5px]">
        <svg width="14" height="14" viewBox="0 0 14 14"><rect x="3" y="1" width="9" height="9" fill="#fff" stroke="#444" /><path d="M1 0v6M4 13h9" stroke="#444" /></svg>
        <span className="ml-[5px]">1152 × 648px</span>
      </div>
      <div className="h-full w-[680px] border-r border-[#dadbdc]" />
      <span className="ml-[20px] text-[#222]">100%</span>
      <span className="ml-[7px] flex h-[15px] w-[15px] items-center justify-center rounded-full border border-[#777] bg-[#f8f8f8]"><span className="h-[2px] w-[7px] bg-[#666]" /></span>
      <div className="relative ml-[10px] h-[3px] w-[84px] bg-[#e2e2e2]">
        <span className="absolute -top-[7px] left-[38px] h-[16px] w-[10px] bg-[#0a7ae2]" />
      </div>
      <span className="ml-[12px] flex h-[15px] w-[15px] items-center justify-center rounded-full border border-[#777] bg-[#f8f8f8] text-[13px] font-bold leading-none text-[#555]">+</span>
    </div>
  </div>
);

// --- phone + emulator toolbar ---
const Phone = () => (
  <>
    <span className="absolute left-[1407px] top-[275px] h-[37px] w-[5px] rounded-r-[2px] bg-[#222]" />
    <span className="absolute left-[1407px] top-[392px] h-[89px] w-[5px] rounded-r-[2px] bg-[#222]" />
    <div className="absolute left-[1010px] top-[38px] h-[862px] w-[399px] rounded-[60px] bg-[#222] p-[2px]">
      <div className="h-full rounded-[58px] border border-b-[#222] border-l-[#555] border-r-[#555] border-t-[#c0c0c0] bg-[#1c1c1c] p-[5px]">
        <div className="flex h-full flex-col rounded-[52px] border border-b-[#222] border-l-[#8f8f8f] border-r-[#8f8f8f] border-t-[#aaaaaa] bg-black pl-[13px] pr-[11px]">
          <div className="flex h-[62px] shrink-0 items-start pt-[18px]">
            <span className="ml-[56px] mt-[1px] h-[13px] w-[13px] rounded-full bg-[#15182a] ring-1 ring-[#222]" />
            <span className="ml-[66px] mt-[3px] h-[8px] w-[85px] rounded-full bg-[#2a2a2a]" />
          </div>
          <div className="flex h-[21px] w-[354px] shrink-0 items-center rounded-t-[12px] bg-[#3700b3] px-[7px] font-['Roboto',sans-serif] text-[13px] text-[#e8e0f8]">
            <span>11:32</span>
            <span className="ml-[10px] flex h-[12px] w-[12px] items-center justify-center rounded-full bg-white"><span className="h-[7px] w-[3px] bg-[#3700b3]" /></span>
            <svg width="10" height="11" viewBox="0 0 10 11" className="ml-[9px]"><path d="M3 0h7v11H0V3z" fill="#fff" /></svg>
            <svg width="14" height="10" viewBox="0 0 14 10" className="ml-auto"><path d="M0 2.500Q7-2.500 14 2.500L7 10z" fill="#fff" /></svg>
            <svg width="11" height="11" viewBox="0 0 11 11" className="ml-px"><path d="M11 0v11H0z" fill="#fff" /></svg>
            <svg width="7" height="11" viewBox="0 0 7 11" className="ml-[5px]"><path d="M2 0h3v1h2v10H0V1h2z" fill="#fff" /></svg>
          </div>
          <div className="flex h-[51px] w-[354px] shrink-0 items-center border-b border-[#8c5ae8] bg-[#6200ee] pl-[14px] pt-[1px] font-['Roboto',sans-serif] text-[18px] font-medium text-white">Products</div>
          <div className="h-[543px] w-[354px] shrink-0 bg-[#d8c513]" />
          <div className="flex h-[69px] w-[354px] shrink-0 items-center justify-center bg-[#ffc107]">
            <span className="flex h-[33px] w-[79px] items-center justify-center rounded-[3px] bg-black font-['Roboto',sans-serif] text-[13px] font-medium tracking-[1.100px] text-white shadow-[0_2px_2px_rgba(0,0,0,0.25)]">BACK</span>
          </div>
          <div className="flex w-[354px] items-center justify-center pt-[15px]">
            <span className="h-0 w-0 border-y-[7px] border-r-[12px] border-y-transparent border-r-[#9e9e9e]" />
            <span className="ml-[90px] h-[13px] w-[13px] rounded-full bg-[#9e9e9e]" />
            <span className="ml-[90px] h-[14px] w-[14px] rounded-[2px] bg-[#9e9e9e]" />
          </div>
        </div>
      </div>
    </div>
  </>
);

const EmuBtn = ({ children }: { children: React.ReactNode }) => (
  <div className="flex h-[44px] w-full shrink-0 items-center justify-center pr-[1px]">{children}</div>
);

const C = "#607d8b";
const EmuToolbar = () => (
  <div className="absolute left-[1417px] top-[38px] flex h-[515px] w-[65px] flex-col border border-black bg-[#f0f0f0]">
    <div className="flex h-[25px] shrink-0 items-center justify-center gap-[19px] pt-[4px] text-[#7e8f98]">
      <span className="h-[1.500px] w-[7px] bg-[#9aa8b0]" />
      <X size={10} strokeWidth={1.600} />
    </div>
    <EmuBtn><Power size={22} color={C} strokeWidth={2.200} /></EmuBtn>
    <EmuBtn><svg width="19" height="19" viewBox="0 0 20 20" fill={C}><path d="M0 6h4l6-5v18l-6-5H0z" /><path d="M12 5a5 5 0 0 1 0 10z" /><path d="M13 1a9 9 0 0 1 0 18v-2a7 7 0 0 0 0-14z" /></svg></EmuBtn>
    <EmuBtn><svg width="16" height="18" viewBox="0 0 16 18" fill={C}><path d="M0 6h4l6-5v16l-6-5H0z" /><path d="M12 5a4 4 0 0 1 0 8z" /></svg></EmuBtn>
    <EmuBtn><svg width="24" height="24" viewBox="0 0 24 24" fill="none" stroke={C} strokeWidth="2.200"><rect x="5" y="7" width="14" height="10" rx="1" transform="rotate(45 12 12)" /><path d="M14 1a11 11 0 0 1 9 9" strokeWidth="1.200" /></svg></EmuBtn>
    <EmuBtn><svg width="24" height="24" viewBox="0 0 24 24" fill="none" stroke={C} strokeWidth="2.200"><rect x="7" y="5" width="10" height="14" rx="1" transform="rotate(45 12 12)" /><path d="M1 10a11 11 0 0 1 9-9" strokeWidth="1.200" /></svg></EmuBtn>
    <EmuBtn><svg width="20" height="18" viewBox="0 0 20 18"><path d="M1 3h4l1-2h8l1 2h4a1 1 0 0 1 1 1v13H0V4a1 1 0 0 1 1-1z" fill={C} /><circle cx="10" cy="10" r="4" fill="none" stroke="#f0f0f0" strokeWidth="2" /></svg></EmuBtn>
    <EmuBtn><ZoomIn size={19} color={C} strokeWidth={1.800} /></EmuBtn>
    <EmuBtn><svg width="14" height="16" viewBox="0 0 14 16"><path d="M13 1v14L1 8z" fill="none" stroke={C} strokeWidth="1.500" /></svg></EmuBtn>
    <EmuBtn><span className="h-[14px] w-[14px] rounded-full border-[1.500px] border-[#607d8b]" /></EmuBtn>
    <EmuBtn><span className="h-[14px] w-[14px] rounded-[1px] border-[1.500px] border-[#607d8b]" /></EmuBtn>
    <EmuBtn>
      <span className="flex gap-[2px]">
        <span className="h-[4px] w-[4px] rounded-full bg-[#607d8b]" />
        <span className="h-[4px] w-[4px] rounded-full bg-[#607d8b]" />
        <span className="h-[4px] w-[4px] rounded-full bg-[#607d8b]" />
      </span>
    </EmuBtn>
  </div>
);

export default function App() {
  return (
    <div className="relative flex h-[1080px] w-[1920px] flex-col overflow-hidden bg-[#f2f2f2] font-['Roboto',sans-serif] text-[12px] text-[#1c1c1c]">
      <MenuBar />
      <NavBar />
      <div className="flex min-h-0 flex-1">
        {/* left tool strip */}
        <div className="relative flex w-[21px] shrink-0 flex-col border-r border-[#d2d2d2] font-['Liberation_Sans',sans-serif] text-[11px] tracking-[0.1px]">
          <VLabel cls="flex h-[85px] flex-col items-center bg-[#bdbdbd] pt-[13px]" textCls="h-[43px] rotate-180 whitespace-nowrap [writing-mode:vertical-rl]" icon={<svg width="12" height="11" viewBox="0 0 12 11"><path d="M0 0h5l2 2h5v9H0z" fill="#666" /></svg>}><span className="underline">1</span>: Project</VLabel>
          <VLabel cls="mt-[14px] flex flex-col items-center" textCls="h-[92px] rotate-180 whitespace-nowrap [writing-mode:vertical-rl]" icon={<svg width="12" height="12" viewBox="0 0 12 12"><path d="M6 0l2 4H4z" fill="#666" /><rect x="0" y="6" width="5" height="5" fill="#666" /><circle cx="9" cy="8.500" r="2.500" fill="#666" /></svg>}>Resource Manager</VLabel>
          <VLabel cls="mt-[438px] flex flex-col items-center" textCls="h-[55px] rotate-180 whitespace-nowrap [writing-mode:vertical-rl]" icon={<svg width="11" height="11" viewBox="0 0 11 11"><rect x="5" y="0" width="5" height="5" fill="#666" /><rect x="0" y="6" width="5" height="5" fill="#666" /><rect x="6" y="6" width="5" height="5" fill="#666" /></svg>}><span className="underline">7</span>: Structure</VLabel>
          <VLabel cls="mt-[26px] flex flex-col items-center" textCls="h-[53px] rotate-180 whitespace-nowrap [writing-mode:vertical-rl]" icon={<FaStar size={12} color="#666" />}><span className="underline">2</span>: Favorites</VLabel>
          <VLabel cls="mt-[24px] flex flex-col items-center" textCls="h-[69px] rotate-180 whitespace-nowrap [writing-mode:vertical-rl]" icon={<AndroidHead color="#666" size={12} />}>Build Variants</VLabel>
        </div>
        <div className="flex min-w-0 flex-1 flex-col">
          <div className="flex h-[778px] shrink-0">
            <ProjectPanel />
            <Editor />
          </div>
          <BuildPanel />
        </div>
        {/* right tool strip */}
        <div className="flex w-[21px] shrink-0 flex-col items-center border-l border-[#d2d2d2] pt-[9px] font-['Liberation_Sans',sans-serif] text-[11px] tracking-[0.2px]">
          <SiGradle size={14} color="#666" />
          <span className="mt-[3px] h-[40px] whitespace-nowrap [writing-mode:vertical-rl]">Gradle</span>
          <svg width="13" height="13" viewBox="0 0 13 13" className="mt-[659px]"><rect x="1" y="1" width="7" height="11" fill="none" stroke="#666" /><rect x="8" y="7" width="5" height="5" fill="#9a8fd0" /></svg>
          <span className="mt-[3px] h-[50px] whitespace-nowrap [writing-mode:vertical-rl]">Emulator</span>
          <svg width="11" height="14" viewBox="0 0 11 14" className="mt-[17px]"><rect x=".5" y=".5" width="9" height="13" rx="1" fill="none" stroke="#666" /><path d="M1 11h8" stroke="#666" /></svg>
          <span className="mt-[3px] whitespace-nowrap [writing-mode:vertical-rl]">Device File Explorer</span>
        </div>
      </div>
      <BottomBar />
      <StatusBar />
      <Taskbar />

      {/* success toast sits under the paint window */}
      <div className="absolute left-[501px] top-[950px] flex h-[47px] w-[134px] flex-col justify-end rounded-b-[3px] bg-[#bdeebd] pb-[7px] pl-[11px] text-[11.700px] leading-[16px] text-[#222] shadow-[0_1px_3px_rgba(0,0,0,0.25)]">
        <span>Success</span>
        <span>Operation succeeded</span>
        <span className="absolute -bottom-[6px] left-[62px] h-0 w-0 border-x-[7px] border-t-[6px] border-x-transparent border-t-[#bdeebd]" />
      </div>

      <Paint />
      <Phone />
      <EmuToolbar />

      {/* activation watermark */}
      <div className="pointer-events-none absolute left-[1599px] top-[946px] flex flex-col text-[#8a8a8a]/70">
        <span className="text-[20px] leading-[26px]">Activate Windows</span>
        <span className="text-[14.200px] leading-[20px]">Go to Settings to activate Windows.</span>
      </div>
    </div>
  );
}
